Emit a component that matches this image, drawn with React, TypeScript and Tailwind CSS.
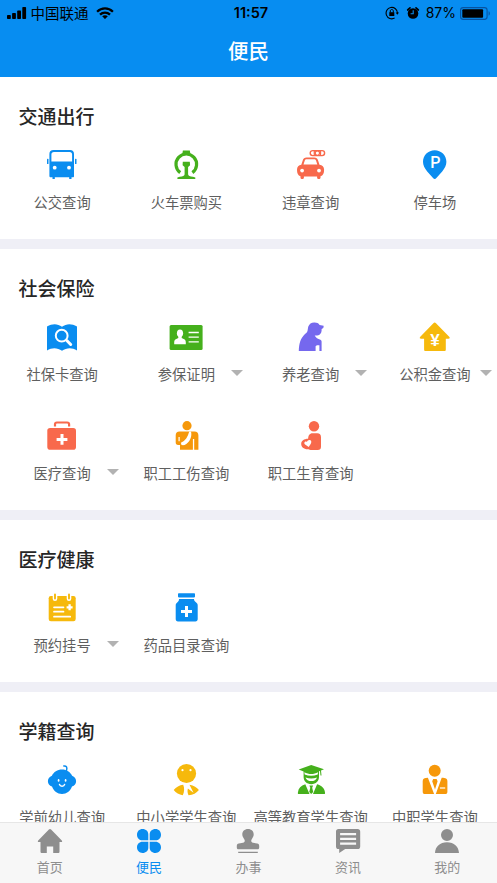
import type { ReactNode } from "react";
import clsx from "clsx";

const BLUE = "#0a8df0";
const GREEN = "#45b01c";
const RED = "#f8694c";
const PURPLE = "#7568ee";
const YELLOW = "#f6b90c";
const ORANGE = "#f6980a";

type Item = { label: string; icon: ReactNode; more?: boolean };
type Section = { title: string; items: Item[] };

function Icon({ children, color }: { children: ReactNode; color: string }) {
  return (
    <svg viewBox="0 0 32 32" className="h-8 w-8 overflow-visible" fill={color}>
      {children}
    </svg>
  );
}

const BusIcon = () => (
  <Icon color={BLUE}>
    <path
      fillRule="evenodd"
      d="M7.5 1h16.500c2.600 0 4 1.600 4 4v22.200c0 .7-.4 1.100-1.100 1.100h-1.400V30h-2.300v-1.700H8.800V30H6.500v-1.700H4.800c-.9 0-1.400-.5-1.400-1.300V5c0-2.400 1.500-4 4.100-4ZM8 2.900c-1.800 0-2.600.9-2.600 2.500v7h20.700v-7c0-1.600-.8-2.500-2.500-2.500Z"
    />
    <rect x="1" y="9.800" width="1.500" height="5.200" rx=".6" />
    <rect x="29" y="9.800" width="1.500" height="5.200" rx=".6" />
    <circle cx="8.700" cy="18.700" r="1.900" fill="#fff" />
    <circle cx="23" cy="18.700" r="1.900" fill="#fff" />
  </Icon>
);

const TrainIcon = () => (
  <Icon color={GREEN}>
    <path d="M10.200 23.600A10.300 10.300 0 1 1 22.400 23.600" fill="none" stroke={GREEN} strokeWidth="3.200" />
    <path d="M12.900 1.500h6.900l.6 3.500h-8.100Z" />
    <path d="M12.800 12.800h7l.3 3.400-2 1.800v7.200c0 1.500 1.900 2.200 4.900 2.600l2.300.6V30H7.400v-1.600l2.300-.6c3-.4 4.900-1.100 4.900-2.600V18l-2-1.800Z" />
  </Icon>
);

const CarIcon = () => (
  <Icon color={RED}>
    <rect x="15.200" y="1.600" width="14.400" height="5" rx="2.500" fill="none" stroke={RED} strokeWidth="1.400" />
    <circle cx="22.400" cy="4.100" r="2.200" fill="none" stroke={RED} strokeWidth="1.300" />
    <path d="M19.300 2v4.200M25.500 2v4.200" stroke={RED} strokeWidth="1.300" />
    <path
      fillRule="evenodd"
      d="M11.500 8.400h7.800c2 0 3.100.9 3.700 2.800l1.500 4.600c2.800.3 4.600 2 4.600 5 0 3.600-1 5.800-3.600 6.500V28.700c0 .9-.8 1.400-1.700 1.400s-1.700-.5-1.700-1.400v-1.200H8.900v1.200c0 .9-.8 1.400-1.700 1.400s-1.700-.5-1.700-1.400v-1.400C3 26.600 2 24.400 2 20.800c0-3 1.700-4.700 4.300-5l1.500-4.600c.6-1.900 1.700-2.800 3.700-2.800Zm.3 1.800c-1.200 0-1.700.5-2 1.400l-1.300 4h13.800l-1.300-4c-.3-.9-.9-1.400-2-1.400Z"
    />
    <circle cx="7.100" cy="21.600" r="1.900" fill="#fff" />
    <circle cx="24" cy="21.600" r="1.900" fill="#fff" />
  </Icon>
);

const ParkingIcon = () => (
  <Icon color={BLUE}>
    <path d="M15.700 1.300c6.500 0 11.700 5.100 11.700 11.500 0 3.600-1.600 6.600-4.200 9.600l-5.600 6.300c-1.500 1.600-2.300 1.600-3.800 0l-5.600-6.300c-2.600-3-4.200-6-4.200-9.600C4 6.400 9.200 1.300 15.700 1.300Z" />
    <text x="16.300" y="19.400" textAnchor="middle" className="font-['Roboto',sans-serif] text-[16px] font-medium" fill="#fff">
      P
    </text>
  </Icon>
);

const BookSearchIcon = () => (
  <Icon color={BLUE}>
    <path d="M1 5.600C6.500 2.300 11.500 2.500 16 5.800c4.500-3.300 9.500-3.500 15-.2v23.800c-5-3.200-10.500-2.900-15 .3-4.500-3.200-10-3.500-15-.3Z" />
    <circle cx="15.700" cy="14.700" r="5.900" fill="none" stroke="#fff" strokeWidth="2" />
    <path d="m20.800 19.500 3.900 4" stroke="#fff" strokeWidth="3" strokeLinecap="round" />
  </Icon>
);

const IdCardIcon = () => (
  <Icon color={GREEN}>
    <rect x="-.4" y="4" width="33" height="25" rx="1.500" />
    <g fill="#fff">
      <ellipse cx="10" cy="12.200" rx="3.100" ry="3.800" />
      <path d="M8.300 14h3.400v3l2.500 1.200c1.200.6 1.600 1.600 1.600 3.300v1.700H4.200v-1.700c0-1.700.4-2.700 1.600-3.300L8.300 17Z" />
      <path d="M18.600 11.500h10.200M18.600 16.100h10.200M18.600 20.800h10.200" stroke="#fff" strokeWidth="1.300" />
    </g>
  </Icon>
);

const ElderIcon = () => (
  <Icon color={PURPLE}>
    <path d="M3.800 30c.2-7.500 1.700-12.900 6.200-17.100.9-.9 1.700-1.100 2.500-3l.7-4.200c1-2.600 3-4 6-4.100 2.300-.1 4.300.5 5.400 2.500l4 .7c.3 1.800-.6 2.800-2 3.200.3 3.900-1.500 6.200-4.400 6.500l-2.500.1c1.200 2.300 3.100 3.500 5.700 4.200.8.300 1.200.9 1.200 1.800V30h-2.200v-5.800h-2.500l-1.300 1V30Z" />
  </Icon>
);

const HouseIcon = () => (
  <Icon color={YELLOW}>
    <path d="M14.400 2.200c.9-.8 1.700-.8 2.600 0l13.200 13.500c1 1.200.6 2-.9 2h-2.500v10.800c0 1-.5 1.500-1.500 1.500H6.600c-1 0-1.500-.5-1.500-1.500V17.700H2.200c-1.500 0-1.900-.8-.9-2Z" />
    <text x="15.900" y="25.400" textAnchor="middle" className="font-['Liberation_Sans',sans-serif] text-[17px] font-bold" fill="#fff">
      ¥
    </text>
  </Icon>
);

const MedkitIcon = () => (
  <Icon color={RED}>
    <path d="M9 6.600V4.300c0-1.100.7-1.800 1.900-1.800h10.300c1.200 0 1.900.7 1.900 1.800v2.300" fill="none" stroke={RED} strokeWidth="2.200" />
    <rect x="1.300" y="8" width="28.700" height="21.700" rx="2.800" />
    <path d="M16 14v10.800M10.600 19.400h10.800" stroke="#fff" strokeWidth="3" />
  </Icon>
);

const InjuryIcon = () => (
  <Icon color={ORANGE}>
    <circle cx="17" cy="5.700" r="4.600" />
    <path d="M9.500 11.500h15c2.600 0 3.900 1.300 3.900 3.900v14.300h-4.200V19h-1.300v10.700H10v-4.800H8.100c-1.600 0-2.400-.8-2.400-2.300v-7.200c0-2.600 1.300-3.900 3.800-3.900Z" />
    <path d="M21 11.400c1.100 4.600-.6 9.400-4.700 12.500-1.500 1.200-3 1.600-4.800 1.200l-.6-2.300c4.400-2.300 7-5.900 8.300-11.400ZM8.500 17h1.200v4.300H8.500Z" fill="#fff" />
  </Icon>
);

const MaternityIcon = () => (
  <Icon color={RED}>
    <circle cx="19" cy="6.300" r="5.200" />
    <path d="M17.500 13.200h4.700c2.500 0 3.800 1.500 3.800 4v9.600c0 2.200-1.100 3.300-3.300 3.300h-6.200c-1.400 0-2.300-.5-3-.9C9.200 29.600 6.200 27.200 6.200 24c0-3 2.700-5.200 6.900-5.200.2-3.400 1.400-5.600 4.400-5.600Z" />
    <path d="m13.700 27-3.600-2.400c-1.800-1.400-.1-4 1.800-2.600.5-2.500 4.300-2.800 4.400-.2.100 1.700-1.300 3.300-2.600 5.200Z" fill="#fff" />
  </Icon>
);

const CalendarIcon = () => (
  <Icon color={YELLOW}>
    <rect x="2.700" y="4" width="27" height="25.300" rx="2.200" />
    <g stroke="#fff" strokeLinecap="round">
      <path d="M9 2.700v4M23 2.700v4" strokeWidth="4.600" />
      <path d="M9 2.500v4M23 2.500v4" stroke={YELLOW} strokeWidth="1.900" />
      <path d="M8 15.300h9.500M8 19.700h9.500M8 24.700h16.200" strokeWidth="1.700" />
      <path d="M23.600 12.300v6M20.600 15.300h6" strokeWidth="2.300" strokeLinecap="butt" />
    </g>
  </Icon>
);

const MedicineIcon = () => (
  <Icon color={BLUE}>
    <rect x="8" y="1.200" width="17" height="4.200" rx=".8" />
    <path d="M9 7h15c0 2 1 2.500 2.200 3.400 1.100.9 1.500 1.600 1.500 3v13.700c0 1.500-.8 2.300-2.300 2.300H8c-1.500 0-2.300-.8-2.300-2.300V13.400c0-1.400.4-2.100 1.500-3C8.400 9.500 9 9 9 7Z" />
    <path d="M16.500 14v11M11 19.500h11" stroke="#fff" strokeWidth="3" />
  </Icon>
);

const BabyIcon = () => (
  <Icon color={BLUE}>
    <path d="M16 5.600c4.700 0 8.200 2.400 10.100 6.200 2.600 1.200 4 3 4 5.500s-1.500 4.600-4.100 5.300C24 27.300 20.800 30 16 30S8 27.300 6 22.600c-2.600-.7-4.100-2.800-4.100-5.300s1.400-4.300 4-5.500C7.800 8 11.300 5.600 16 5.600Z" />
    <path d="M17.800 2c2.600-.3 3.700 1.400 2.700 4.500" fill="none" stroke={BLUE} strokeWidth="1.500" strokeLinecap="round" />
    <ellipse cx="12.600" cy="16.400" rx=".9" ry="1.400" fill="#fff" />
    <ellipse cx="19.600" cy="16.400" rx=".9" ry="1.400" fill="#fff" />
    <path d="M13.500 20.400c.6 2.300 4.500 2.300 5.100 0" fill="none" stroke="#fff" strokeWidth="1.500" strokeLinecap="round" />
  </Icon>
);

const PupilIcon = () => (
  <Icon color={YELLOW}>
    <circle cx="16.500" cy="9.500" r="9.600" />
    <circle cx="12.500" cy="6.200" r="1.100" fill="#fff" />
    <circle cx="20.500" cy="6.200" r="1.100" fill="#fff" />
    <path d="M3.700 26c2.500-2.900 5.700-4.900 9.500-5.300 1.400 3.400 1.200 7.200-.4 10.600C9 30.600 6 29.200 3.700 26ZM28.900 26c-2-2.600-5-4.700-9.400-5.300l4 8-5.600-4.200c-.7 2.500-.4 4.500.6 6.800 4.600-.3 8-2.200 10.400-5.300Z" />
  </Icon>
);

const GraduateIcon = () => (
  <Icon color={GREEN}>
    <path d="M16.200 1 29 5.300l-3 1.300.5 4.800h-1L25 7l-1 .3v5.500c0 4.400-3 7.400-7.700 7.400s-7.700-3-7.700-7.400V7.600L3.700 5.400Z" />
    <path d="M9.300 8.300c4.500 2.400 9.300 2.400 13.800 0l-.4 2.100c-4.300 1.900-8.700 1.900-13 0ZM10.500 13.400c4 1.400 7.500 1.400 11.500 0-1.200 4.800-10.200 4.800-11.500 0Z" fill="#fff" />
    <path d="M10.300 20.300 14.500 30H3.800c-.8 0-1.100-.5-.9-1.600.5-4.200 3-6.800 7.400-8.100ZM22.100 20.300 18 30h11.100c.8 0 1.100-.5.9-1.600-.5-4.200-3.400-6.800-7.900-8.100ZM14.400 21.400h3.700l-.9 2.300 1 4.300-2 2-2-2 1.100-4.300Z" />
  </Icon>
);

const VocationalIcon = () => (
  <Icon color={ORANGE}>
    <g transform="translate(-.6)">
      <circle cx="16.300" cy="6.800" r="6" />
      <path d="M9.500 13.800 15.700 30H6.600c-1.500 0-2.300-.8-2.300-2.300V17c0-2.300 1.700-3.200 5.200-3.200ZM23.300 13.800 17.400 30h9.300c1.500 0 2.300-.8 2.300-2.300V17c0-2.300-1.700-3.200-5.700-3.200ZM14.800 15h3.400l1 2.300-2.600 8.300-2.800-8.300Z" />
      <path d="M21.500 24h5.300" stroke="#fff" strokeWidth="1.200" />
    </g>
  </Icon>
);

const sections: Section[] = [
  {
    title: "交通出行",
    items: [
      { label: "公交查询", icon: <BusIcon /> },
      { label: "火车票购买", icon: <TrainIcon /> },
      { label: "违章查询", icon: <CarIcon /> },
      { label: "停车场", icon: <ParkingIcon /> },
    ],
  },
  {
    title: "社会保险",
    items: [
      { label: "社保卡查询", icon: <BookSearchIcon /> },
      { label: "参保证明", icon: <IdCardIcon />, more: true },
      { label: "养老查询", icon: <ElderIcon />, more: true },
      { label: "公积金查询", icon: <HouseIcon />, more: true },
      { label: "医疗查询", icon: <MedkitIcon />, more: true },
      { label: "职工工伤查询", icon: <InjuryIcon /> },
      { label: "职工生育查询", icon: <MaternityIcon /> },
    ],
  },
  {
    title: "医疗健康",
    items: [
      { label: "预约挂号", icon: <CalendarIcon />, more: true },
      { label: "药品目录查询", icon: <MedicineIcon /> },
    ],
  },
  {
    title: "学籍查询",
    items: [
      { label: "学前幼儿查询", icon: <BabyIcon /> },
      { label: "中小学学生查询", icon: <PupilIcon /> },
      { label: "高等教育学生查询", icon: <GraduateIcon /> },
      { label: "中职学生查询", icon: <VocationalIcon /> },
    ],
  },
];

const tabs = [
  {
    label: "首页",
    icon: <path d="M10.900.5c.8-.7 1.400-.7 2.200 0l10.700 11c.7.9.4 1.600-.7 1.600h-1.600v9.400c0 1-.5 1.500-1.500 1.500h-4.800v-6.600H8.800V24H4c-1 0-1.500-.5-1.500-1.500v-9.400H.9c-1.100 0-1.400-.7-.7-1.600Z" />,
  },
  {
    label: "便民",
    active: true,
    icon: (
      <path d="M5.500 0C9 0 11.300 2.300 11.300 5.500v5.800H5.500C2.300 11.300 0 9 0 5.700S2.300 0 5.500 0Zm13 0C21.700 0 24 2.400 24 5.700s-2.300 5.600-5.500 5.600h-5.800V5.500C12.700 2.300 15 0 18.500 0Zm-13 12.700h5.800v5.800c0 3.200-2.300 5.500-5.800 5.500C2.300 24 0 21.600 0 18.300s2.300-5.600 5.500-5.600Zm7.200 0h5.800c3.200 0 5.500 2.300 5.500 5.600S21.700 24 18.500 24c-3.500 0-5.800-2.300-5.800-5.500Z" />
    ),
  },
  {
    label: "办事",
    icon: (
      <path d="M12 0c3.500 0 5.700 2.300 5.700 5.500 0 2-1.100 3.300-2.100 5-.8 1.500-.3 2.900 1.400 3.300l4.200.8c1.400.3 2 1 2 2.400v1.400c0 1.300-.7 1.900-2 1.900H2.800c-1.300 0-2-.6-2-1.900V17c0-1.400.6-2.100 2-2.400l4.200-.8c1.700-.4 2.200-1.800 1.400-3.300-1-1.700-2.100-3-2.100-5C6.300 2.300 8.500 0 12 0ZM2.200 22.700h19.600V24H2.200Z" />
    ),
  },
  {
    label: "资讯",
    icon: (
      <path
        fillRule="evenodd"
        d="M2.600 0h19c1.700 0 2.600.9 2.600 2.600v14.800c0 1.700-.9 2.600-2.600 2.600H9.200l-6 4v-4h-.6C.9 20 0 19.100 0 17.400V2.600C0 .9.9 0 2.600 0Zm1.500 4v2.200h16V4Zm0 4.700v2.200h16V8.700Zm0 4.800v2.200h16v-2.200Z"
      />
    ),
  },
  {
    label: "我的",
    icon: (
      <path d="M12 0a6 6 0 1 1 0 12A6 6 0 0 1 12 0ZM0 24c.3-6.600 5-10.800 12-10.800S23.700 17.400 24 24Z" />
    ),
  },
];

function StatusBar() {
  return (
    <div className="flex h-[26px] items-center justify-between pl-[7px] pr-[6px] text-black">
      <div className="flex flex-1 items-center">
        <svg viewBox="0 0 20 12" className="h-3 w-5">
          <rect x="0" y="8" width="3.800" height="4" rx=".8" />
          <rect x="5.100" y="6" width="3.800" height="6" rx=".8" />
          <rect x="10.200" y="3.400" width="3.800" height="8.600" rx=".8" />
          <rect x="15.300" y="0" width="3.800" height="12" rx=".8" />
        </svg>
        <span className="ml-[3.500px] text-[14.5px] leading-5">中国联通</span>
        <svg viewBox="0 0 18 12" className="ml-[7px] h-3 w-[18px]" fill="none" stroke="#000" strokeWidth="2.300">
          <path d="M1.100 4.700c4.500-4.400 11.300-4.400 15.800 0" />
          <path d="M4 7.700c2.900-2.800 7.100-2.800 10 0" />
          <path d="M6.200 9.300c1.600-1.500 4-1.500 5.600 0L9 12.100Z" fill="#000" stroke="none" />
        </svg>
      </div>
      <span className="ml-[4px] font-['Inter',sans-serif] text-[14.5px] leading-5 font-semibold">11:57</span>
      <div className="flex flex-1 items-center justify-end">
        <svg viewBox="0 0 14 14" className="h-[14px] w-[14px]" fill="none" stroke="#000">
          <path d="M9.600 12.100A5.700 5.700 0 1 1 12.500 7" strokeWidth="1.100" />
          <path d="m10.600 6.400 3.400 0-1.700 2.300Z" fill="#000" stroke="none" />
          <rect x="4.300" y="6.200" width="5" height="3.800" fill="#000" stroke="none" />
          <path d="M5.300 6.500V5c0-2 3-2 3 0v1.500" strokeWidth="1" />
        </svg>
        <svg viewBox="0 0 14 14" className="ml-[7px] h-[14px] w-[14px]">
          <circle cx="7" cy="7.500" r="5.300" />
          <path d="M1.700 4 4 1.900M12.300 4 10 1.900" stroke="#000" strokeWidth="1.700" strokeLinecap="round" />
          <path d="M7.200 4.300v3.500H4.600" fill="none" stroke={BLUE} strokeWidth="1.100" />
        </svg>
        <span className="ml-[6px] font-['Inter',sans-serif] text-[14px] leading-5">87%</span>
        <svg viewBox="0 0 31 13" className="ml-[4px] h-[13px] w-[31px]">
          <rect x=".6" y=".6" width="26.500" height="11.800" rx="2.600" fill="none" stroke="#0753a0" strokeWidth="1.100" />
          <rect x="2.300" y="2.300" width="20.800" height="8.400" rx="1" />
          <path d="M28.600 4.300c1.600.6 1.600 3.800 0 4.400Z" fill="#0753a0" />
        </svg>
      </div>
    </div>
  );
}

function ServiceItem({ label, icon, more }: Item) {
  return (
    <div className="flex flex-col items-center">
      {icon}
      <div className="mt-[10.5px] mb-[.5px] grid w-full grid-cols-[1fr_auto_1fr] items-center text-[14.3px] leading-5 whitespace-nowrap text-[#5f5f5f]">
        <span className="col-start-2">{label}</span>
        {more && (
          <svg viewBox="0 0 12 6" className="mr-[5.500px] -mt-0.5 h-[6px] w-3 justify-self-end" fill="#b2b2b2">
            <path d="M0 0h12L6 6Z" />
          </svg>
        )}
      </div>
    </div>
  );
}

export default function App() {
  return (
    <div className="flex h-[883px] w-full flex-col overflow-hidden bg-[#efeff6] font-['Noto_Sans_CJK_SC',sans-serif]">
      <header className="h-[77px] shrink-0 bg-[#078df1]">
        <StatusBar />
        <h1 className="mt-[9px] text-center text-[20.5px] leading-[30px] font-medium text-white">便民</h1>
      </header>

      <main className="flex min-h-0 flex-1 flex-col gap-[10px] overflow-hidden">
        {sections.map((section) => (
          <section key={section.title} className="shrink-0 bg-white pt-[25px] pb-[27px]">
            <h2 className="pl-[18.500px] text-[19px] leading-7 font-medium text-[#262626]">{section.title}</h2>
            <div className="mt-[19px] grid grid-cols-4 gap-y-9">
              {section.items.map((item) => (
                <ServiceItem key={item.label} {...item} />
              ))}
            </div>
          </section>
        ))}
      </main>

      <nav className="grid h-[61px] shrink-0 grid-cols-5 border-t border-[#e6e6e6] bg-[#f7f7f7]">
        {tabs.map((tab) => (
          <div
            key={tab.label}
            className={clsx("flex flex-col items-center pt-[6px]", tab.active ? "text-[#0a8df0]" : "text-[#8e8e8e]")}
          >
            <svg viewBox="0 0 24 24" className="h-6 w-6 overflow-visible" fill="currentColor">
              {tab.icon}
            </svg>
            <span className="mt-[4px] text-[13px] leading-5">{tab.label}</span>
          </div>
        ))}
      </nav>
    </div>
  );
}
